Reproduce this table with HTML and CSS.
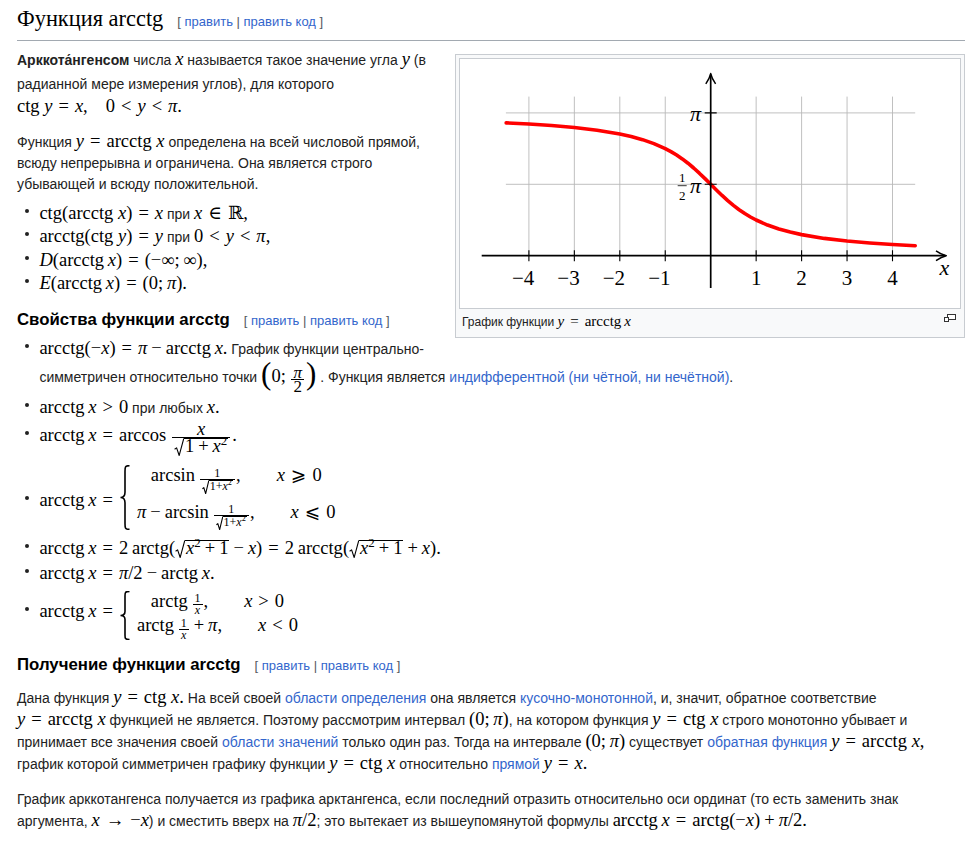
FILE: index.html
```html
<!DOCTYPE html>
<html lang="ru">
<head>
<meta charset="utf-8">
<title>Функция arcctg</title>
<link rel="stylesheet" href="styles.css">
</head>
<body>
<div class="content">
<h2 class="h2">Функция arcctg<span class="edit">[ <a href="#">править</a> | <a href="#">править код</a> ]</span></h2>

<div class="thumb">
 <div class="thumbinner">
  <div class="thumbimage">
   <svg class="plot" viewBox="0 0 500 249" width="500" height="249">
    <path class="grid" d="M68.9 37.6V196.7M114.35 37.6V196.7M159.8 37.6V196.7M205.25 37.6V196.7M296.15 37.6V196.7M341.6 37.6V196.7M387.05 37.6V196.7M432.5 37.6V196.7M45.9 53.9H455.2M45.9 125.3H455.2"/>
    <polyline class="curve" points="46.17,63.86 68.9,65.05 91.63,66.57 114.35,68.54 137.08,71.21 159.8,74.99 171.16,77.51 182.53,80.64 193.89,84.58 205.25,89.61 210.93,92.64 216.61,96.06 222.29,99.92 227.98,104.24 233.66,109.0 239.34,114.18 245.02,119.66 250.7,125.31 256.38,130.96 262.06,136.44 267.74,141.62 273.43,146.38 279.11,150.70 284.79,154.56 290.47,157.98 296.15,161.01 307.51,166.04 318.88,169.98 330.24,173.11 341.6,175.63 364.33,179.41 387.05,182.08 409.78,184.05 432.5,185.57 455.23,186.76"/>
    <path class="axis" d="M21.7 196.7H485M250.7 229V15.5"/>
    <path class="tip" d="M476 191.8Q481.5 195.6 486.3 196.7Q481.5 197.8 476 201.6"/>
    <path class="tip" d="M245.8 24.9Q249.6 19.4 250.7 14.6Q251.8 19.4 255.6 24.9"/>
    <path class="ticks" d="M68.9 191.2V202.2M114.35 191.2V202.2M159.8 191.2V202.2M205.25 191.2V202.2M296.15 191.2V202.2M341.6 191.2V202.2M387.05 191.2V202.2M432.5 191.2V202.2M244.7 53.9H256.7M244.7 125.3H256.7"/>
    <g class="lbl">
     <text x="74.3" y="225.7" text-anchor="end">−4</text>
     <text x="119.7" y="225.7" text-anchor="end">−3</text>
     <text x="165.1" y="225.7" text-anchor="end">−2</text>
     <text x="210.6" y="225.7" text-anchor="end">−1</text>
     <text x="296.15" y="225.7" text-anchor="middle">1</text>
     <text x="341.6" y="225.7" text-anchor="middle">2</text>
     <text x="387.05" y="225.7" text-anchor="middle">3</text>
     <text x="432.5" y="225.7" text-anchor="middle">4</text>
     <text class="it" x="479.5" y="215.5">x</text>
     <text class="it" x="241" y="62.3" text-anchor="end">π</text>
     <text class="sm" x="222.2" y="123.3" text-anchor="middle">1</text>
     <text class="sm" x="222.2" y="140.5" text-anchor="middle">2</text>
     <text class="it" x="241" y="134" text-anchor="end">π</text>
    </g>
    <path class="fbar" d="M217.7 126.7H226.7"/>
   </svg>
  </div>
  <div class="thumbcaption"><span class="magnify"><svg width="12" height="8" viewBox="0 0 12 8"><rect x="3.5" y="0.5" width="8" height="5" fill="#fff" stroke="#333"/><rect x="0.5" y="3.5" width="4" height="4" fill="#fff" stroke="#333"/></svg></span>График функции <span class="m cm"><i>y</i><span class="r">=</span><span class="f">arcctg</span>&thinsp;<i>x</i></span></div>
 </div>
</div>

<p class="lead"><b>Арккота́нгенсом</b> числа <span class="m"><i>x</i></span> называется такое значение угла <span class="m"><i>y</i></span> (в радианной мере измерения углов), для которого <span class="m"><span class="f">ctg</span> <i>y</i><span class="r">=</span><i>x</i>,<span class="q"></span>0<span class="r">&lt;</span><i>y</i><span class="r">&lt;</span><i>π</i>.</span></p>

<p>Функция <span class="m"><i>y</i><span class="r">=</span><span class="f">arcctg</span> <i>x</i></span> определена на всей числовой прямой, всюду непрерывна и ограничена. Она является строго убывающей и всюду положительной.</p>

<ul class="list l1">
 <li><span class="m"><span class="f">ctg</span>(<span class="f">arcctg</span> <i>x</i>)<span class="r">=</span><i>x</i></span> при <span class="m"><i>x</i><span class="r">∈</span>ℝ,</span></li>
 <li><span class="m"><span class="f">arcctg</span>(<span class="f">ctg</span> <i>y</i>)<span class="r">=</span><i>y</i></span> при <span class="m">0<span class="r">&lt;</span><i>y</i><span class="r">&lt;</span><i>π</i>,</span></li>
 <li><span class="m"><i>D</i>(<span class="f">arcctg</span>&thinsp;<i>x</i>)<span class="r">=</span>(−∞;&thinsp;∞),</span></li>
 <li><span class="m"><i>E</i>(<span class="f">arcctg</span>&thinsp;<i>x</i>)<span class="r">=</span>(0;&thinsp;<i>π</i>).</span></li>
</ul>

<h3 class="h3">Свойства функции arcctg<span class="edit">[ <a href="#">править</a> | <a href="#">править код</a> ]</span></h3>

<ul class="list">
 <li><span class="m"><span class="f">arcctg</span>(−<i>x</i>)<span class="r">=</span><i>π</i><span class="o">−</span><span class="f">arcctg</span>&thinsp;<i>x</i>.</span> График функции центрально-симметричен относительно точки <span class="m"><span class="bigp">(</span>0;&thinsp;<span class="frac fm"><span class="num"><i>π</i></span><span class="den">2</span></span><span class="bigp">)</span></span> . Функция является <a href="#">индифферентной (ни чётной, ни нечётной)</a>.</li>
 <li><span class="m"><span class="f">arcctg</span>&thinsp;<i>x</i><span class="r">&gt;</span>0</span> при любых <span class="m"><i>x</i>.</span></li>
 <li><span class="m"><span class="f">arcctg</span>&thinsp;<i>x</i><span class="r">=</span><span class="f">arccos</span>&thinsp;<span class="frac fl"><span class="num"><i>x</i></span><span class="den"><span class="sqrt"><span class="rad"><svg width="10" height="1" viewBox="0 0 10 20" preserveAspectRatio="none"><path d="M0.6 12.5L2.6 11L5.2 19.4L9.8 0.5" vector-effect="non-scaling-stroke"/></svg></span><span class="rc">1<span class="o">+</span><i>x</i><span class="sup">2</span></span></span></span></span>.</span></li>
 <li><span class="m"><span class="f">arcctg</span>&thinsp;<i>x</i><span class="r">=</span><span class="cases c1"><span class="brace"><svg width="12" height="1" viewBox="0 0 12 100" preserveAspectRatio="none"><path d="M10.5 1C6 1 6 3 6 10L6 42C6 47 4 50 1.5 50C4 50 6 53 6 58L6 90C6 97 6 99 10.5 99" vector-effect="non-scaling-stroke"/></svg></span><span class="rows"><span class="row"><span class="f">arcsin</span>&thinsp;<span class="frac fs"><span class="num">1</span><span class="den"><span class="sqrt ss"><span class="rad"><svg width="10" height="1" viewBox="0 0 10 20" preserveAspectRatio="none"><path d="M0.6 12.5L2.6 11L5.2 19.4L9.8 0.5" vector-effect="non-scaling-stroke"/></svg></span><span class="rc">1+<i>x</i><span class="sup">2</span></span></span></span></span>,<span class="qq"></span><i>x</i><span class="r">⩾</span>0</span><span class="row"><i>π</i><span class="o">−</span><span class="f">arcsin</span>&thinsp;<span class="frac fs"><span class="num">1</span><span class="den"><span class="sqrt ss"><span class="rad"><svg width="10" height="1" viewBox="0 0 10 20" preserveAspectRatio="none"><path d="M0.6 12.5L2.6 11L5.2 19.4L9.8 0.5" vector-effect="non-scaling-stroke"/></svg></span><span class="rc">1+<i>x</i><span class="sup">2</span></span></span></span></span>,<span class="qq"></span><i>x</i><span class="r">⩽</span>0</span></span></span></span></li>
 <li><span class="m"><span class="f">arcctg</span>&thinsp;<i>x</i><span class="r">=</span>2&thinsp;<span class="f">arctg</span>(<span class="sqrt sq5"><span class="rad"><svg width="10" height="1" viewBox="0 0 10 20" preserveAspectRatio="none"><path d="M0.6 12.5L2.6 11L5.2 19.4L9.8 0.5" vector-effect="non-scaling-stroke"/></svg></span><span class="rc"><i>x</i><span class="sup">2</span><span class="o">+</span>1</span></span><span class="o">−</span><i>x</i>)<span class="r">=</span>2&thinsp;<span class="f">arcctg</span>(<span class="sqrt sq5"><span class="rad"><svg width="10" height="1" viewBox="0 0 10 20" preserveAspectRatio="none"><path d="M0.6 12.5L2.6 11L5.2 19.4L9.8 0.5" vector-effect="non-scaling-stroke"/></svg></span><span class="rc"><i>x</i><span class="sup">2</span><span class="o">+</span>1</span></span><span class="o">+</span><i>x</i>).</span></li>
 <li><span class="m"><span class="f">arcctg</span>&thinsp;<i>x</i><span class="r">=</span><i>π</i>/2<span class="o">−</span><span class="f">arctg</span>&thinsp;<i>x</i>.</span></li>
 <li><span class="m"><span class="f">arcctg</span>&thinsp;<i>x</i><span class="r">=</span><span class="cases c2"><span class="brace"><svg width="12" height="1" viewBox="0 0 12 100" preserveAspectRatio="none"><path d="M10.5 1C6 1 6 3 6 10L6 42C6 47 4 50 1.5 50C4 50 6 53 6 58L6 90C6 97 6 99 10.5 99" vector-effect="non-scaling-stroke"/></svg></span><span class="rows"><span class="row"><span class="f">arctg</span>&thinsp;<span class="frac fs"><span class="num">1</span><span class="den dx"><i>x</i></span></span>,<span class="qq"></span><i>x</i><span class="r">&gt;</span>0</span><span class="row"><span class="f">arctg</span>&thinsp;<span class="frac fs"><span class="num">1</span><span class="den dx"><i>x</i></span></span><span class="o">+</span><i>π</i>,<span class="qq"></span><i>x</i><span class="r">&lt;</span>0</span></span></span></span></li>
</ul>

<h3 class="h3">Получение функции arcctg<span class="edit">[ <a href="#">править</a> | <a href="#">править код</a> ]</span></h3>

<p>Дана функция <span class="m"><i>y</i><span class="r">=</span><span class="f">ctg</span> <i>x</i>.</span> На всей своей <a href="#">области определения</a> она является <a href="#">кусочно-монотонной</a>, и, значит, обратное соответствие <span class="m"><i>y</i><span class="r">=</span><span class="f">arcctg</span> <i>x</i></span> функцией не является. Поэтому рассмотрим интервал <span class="m">(0;&thinsp;<i>π</i>)</span>, на котором функция <span class="m"><i>y</i><span class="r">=</span><span class="f">ctg</span> <i>x</i></span> строго монотонно убывает и принимает все значения своей <a href="#">области значений</a> только один раз. Тогда на интервале <span class="m">(0;&thinsp;<i>π</i>)</span> существует <a href="#">обратная функция</a> <span class="m"><i>y</i><span class="r">=</span><span class="f">arcctg</span> <i>x</i>,</span> график которой симметричен графику функции <span class="m"><i>y</i><span class="r">=</span><span class="f">ctg</span> <i>x</i></span> относительно <a href="#">прямой</a> <span class="m"><i>y</i><span class="r">=</span><i>x</i>.</span></p>

<p>График арккотангенса получается из графика арктангенса, если последний отразить относительно оси ординат (то есть заменить знак аргумента, <span class="m"><i>x</i><span class="r">→</span>−<i>x</i></span>) и сместить вверх на <span class="m"><i>π</i>/2</span>; это вытекает из вышеупомянутой формулы <span class="m"><span class="f">arcctg</span>&thinsp;<i>x</i><span class="r">=</span><span class="f">arctg</span>(−<i>x</i>)<span class="o">+</span><i>π</i>/2.</span></p>
</div>
</body>
</html>
```

FILE: styles.css
```css
html, body {
  margin: 0;
  padding: 0;
  background: #fff;
}
body {
  font-family: "Liberation Sans", Arial, sans-serif;
  font-size: 14px;
  line-height: 21px;
  color: #222;
}
.content {
  padding: 4px 15px 0 17px;
}
a {
  color: #36c;
  text-decoration: none;
}
b {
  font-weight: bold;
}

/* headings */
.h2 {
  margin: 0;
  padding-bottom: 3px;
  border-bottom: 1px solid #a2a9b1;
  font-family: "Liberation Serif", "Times New Roman", serif;
  font-size: 22.4px;
  font-weight: normal;
  line-height: 30px;
  color: #000;
}
.h3 {
  margin: 13px 0 5px;
  font-size: 16.8px;
  font-weight: bold;
  line-height: 24px;
  color: #000;
}
.edit {
  margin-left: 14px;
  font-family: "Liberation Sans", Arial, sans-serif;
  font-size: 13px;
  font-weight: normal;
  color: #54595d;
  white-space: nowrap;
}

/* paragraphs and lists */
p {
  margin: 0 0 8px;
}
p + p {
  margin-top: 14px;
}
.lead + p {
  margin-top: 11px;
}
.h3 + p {
  margin-top: 9px;
}
.lead {
  margin-top: 8px;
  line-height: 23.5px;
}
.list {
  margin: 0 0 0 22.4px;
  padding: 0;
  list-style: none;
}
.list li {
  margin-bottom: 0.5px;
}
.l1 li {
  margin-bottom: 1.5px;
}
.list li::before {
  content: "";
  display: inline-block;
  width: 4px;
  height: 4px;
  margin-left: -14px;
  margin-right: 10px;
  border-radius: 50%;
  background: #222;
  vertical-align: 6px;
}

/* figure */
.thumb {
  float: right;
  margin: 13px 0 18px 20px;
}
.thumbinner {
  width: 502px;
  padding: 3px;
  border: 1px solid #c8ccd1;
  background: #f8f9fa;
}
.thumbimage {
  border: 1px solid #c8ccd1;
  background: #fff;
}
.plot {
  display: block;
  width: 500px;
  height: 249px;
}
.plot .grid {
  fill: none;
  stroke: #b9b9b9;
  stroke-width: 0.9;
}
.plot .curve {
  fill: none;
  stroke: #ff0000;
  stroke-width: 3.6;
  stroke-linejoin: round;
  stroke-linecap: round;
}
.plot .axis {
  fill: none;
  stroke: #000;
  stroke-width: 1.7;
}
.plot .tip {
  fill: none;
  stroke: #000;
  stroke-width: 1.5;
  stroke-linejoin: round;
}
.plot .ticks {
  fill: none;
  stroke: #000;
  stroke-width: 1.1;
}
.plot .fbar {
  fill: none;
  stroke: #000;
  stroke-width: 0.8;
}
.plot .lbl text {
  font-family: "Liberation Serif", "DejaVu Serif", serif;
  font-size: 21px;
  fill: #000;
}
.plot .lbl .it {
  font-style: italic;
  font-size: 22px;
}
.plot .lbl .sm {
  font-size: 13px;
}
.thumbcaption {
  padding: 3px;
  font-size: 12px;
  line-height: 18px;
  color: #222;
}
.magnify {
  float: right;
  margin: 2px 2px 0 6px;
}
.magnify svg {
  display: block;
}

/* math */
.m {
  font-family: "Liberation Serif", "DejaVu Serif", "DejaVu Sans", serif;
  font-size: 18.5px;
  line-height: 21px;
  color: #000;
  white-space: nowrap;
}
.m i {
  font-style: italic;
}
.cm {
  font-size: 15px;
  line-height: 18px;
}
.f {
  font-weight: normal;
}
.r {
  margin: 0 6px;
}
.o {
  margin: 0 4px;
}
.q {
  display: inline-block;
  width: 18px;
}
.qq {
  display: inline-block;
  width: 36px;
}
.sup {
  font-size: 0.7em;
  vertical-align: 0.55em;
  line-height: 0;
}
.bigp {
  font-size: 31px;
  line-height: 26px;
  vertical-align: -1.5px;
}

.frac {
  display: inline-flex;
  flex-direction: column;
  text-align: center;
  margin: 0 2px;
}
.frac .num {
  padding: 0 2px;
  border-bottom: 1px solid currentColor;
}
.frac .den {
  padding: 0 2px;
}
.fl {
  vertical-align: 6.3px;
}
.fl .num {
  padding-top: 2px;
  line-height: 15px;
}
.fl .den {
  line-height: 14px;
}
.fm {
  font-size: 17px;
  vertical-align: 4px;
}
.fm .num {
  line-height: 12px;
}
.fm .den {
  line-height: 13px;
  padding-bottom: 4px;
}
.fs {
  font-size: 12px;
  vertical-align: 4.5px;
  margin: 0 1px;
}
.fs .num {
  line-height: 11px;
}
.fs .den {
  line-height: 10px;
}

.sqrt {
  display: inline-flex;
}
.rad {
  display: block;
  flex: none;
  align-self: stretch;
  width: 10px;
}
.rad svg {
  display: block;
  width: 100%;
  height: 100%;
}
.rad path {
  fill: none;
  stroke: currentColor;
  stroke-width: 1.1;
  stroke-linejoin: round;
}
.rc {
  align-self: baseline;
  padding: 0 1px 3px;
  border-top: 1px solid currentColor;
  line-height: 14px;
}
.sq5 .rc {
  padding-bottom: 8px;
}
.sq5 .rad svg {
  height: calc(100% - 5px);
}
.ss .rad {
  width: 7px;
}
.ss .rc {
  padding-bottom: 2px;
  line-height: 11px;
}

.cases {
  display: inline-flex;
}
.brace {
  display: block;
  flex: none;
  align-self: stretch;
  width: 12px;
}
.brace svg {
  display: block;
  width: 100%;
  height: 100%;
}
.brace path {
  fill: none;
  stroke: currentColor;
  stroke-width: 1.6;
}
.rows {
  display: flex;
  flex-direction: column;
  align-items: center;
  align-self: baseline;
  padding-left: 6px;
}
.row {
  display: block;
  line-height: 21px;
  white-space: nowrap;
}
.c1 {
  vertical-align: 25px;
  margin-top: 9px;
  margin-bottom: 7px;
}
.c1 .rows {
  gap: 8px;
}
.c2 {
  vertical-align: 10.7px;
  margin-top: 5px;
}
```
